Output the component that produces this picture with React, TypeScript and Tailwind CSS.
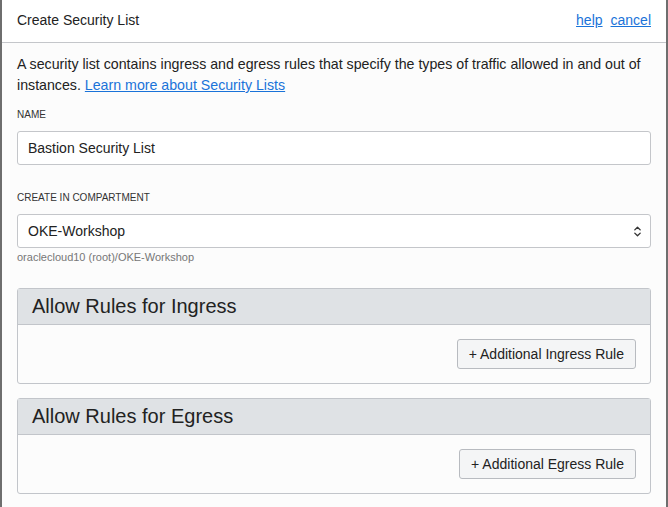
import {ChevronsUpDown} from 'lucide-react';

function RulePanel({title, action}: {title: string; action: string}) {
  return (
    <div className="rounded-[3px] border border-[#c2c5ca] bg-[#fcfcfc]">
      <div className="h-[36px] border-b border-[#c2c5ca] bg-[#dfe2e5] px-[14px] text-[20px] leading-[35px] text-[#222]">
        {title}
      </div>
      <div className="flex h-[58px] items-center justify-end pr-[14px]">
        <button
          type="button"
          className="h-[30px] rounded-[3px] border border-[#b8bbc0] bg-[#f4f5f6] px-[11px] text-[14px] text-[#222]"
        >
          {action}
        </button>
      </div>
    </div>
  );
}

export default function App() {
  return (
    <div
      className="h-[507px] w-[668px] overflow-hidden border-x-2 border-[#6e6e6e] bg-[#fcfcfc] text-[#333]"
      style={{fontFamily: '"Liberation Sans", Arial, sans-serif'}}
    >
      {/* dialog header */}
      <div className="flex h-[43px] items-center justify-between border-b border-[#c4c6ca] bg-white px-[15px] pb-[1px]">
        <span className="text-[14px] text-[#222]">Create Security List</span>
        <div className="flex gap-[8px] text-[14px] text-[#1a73d9]">
          <a href="#" className="underline">help</a>
          <a href="#" className="underline">cancel</a>
        </div>
      </div>

      <div className="px-[15px] pt-[11px]">
        <p className="text-[14.2px] leading-[21px] text-[#222]">
          A security list contains ingress and egress rules that specify the types of traffic allowed in and out of
          instances.{' '}
          <a href="#" className="text-[#1a73d9] underline">
            Learn more about Security Lists
          </a>
        </p>

        <div className="mt-[12px] text-[10px] leading-[14px] text-[#333]">NAME</div>
        <div className="mt-[9px] flex h-[34px] items-center rounded-[3px] border border-[#c4c6ca] bg-white px-[10px] text-[14px] text-[#222]">
          Bastion Security List
        </div>

        <div className="mt-[26px] text-[10px] leading-[14px] text-[#333]">CREATE IN COMPARTMENT</div>
        <div className="mt-[9px] flex h-[34px] items-center justify-between rounded-[3px] border border-[#c4c6ca] bg-white pl-[10px] pr-[6px] text-[14px] text-[#222]">
          <span>OKE-Workshop</span>
          <ChevronsUpDown size={13} strokeWidth={2.5} className="text-[#333]" />
        </div>
        <div className="mt-[2px] text-[11px] leading-[15px] text-[#777]">oraclecloud10 (root)/OKE-Workshop</div>

        <div className="mt-[23px] flex flex-col gap-[14px]">
          <RulePanel title="Allow Rules for Ingress" action="+ Additional Ingress Rule" />
          <RulePanel title="Allow Rules for Egress" action="+ Additional Egress Rule" />
        </div>
      </div>
    </div>
  );
}
